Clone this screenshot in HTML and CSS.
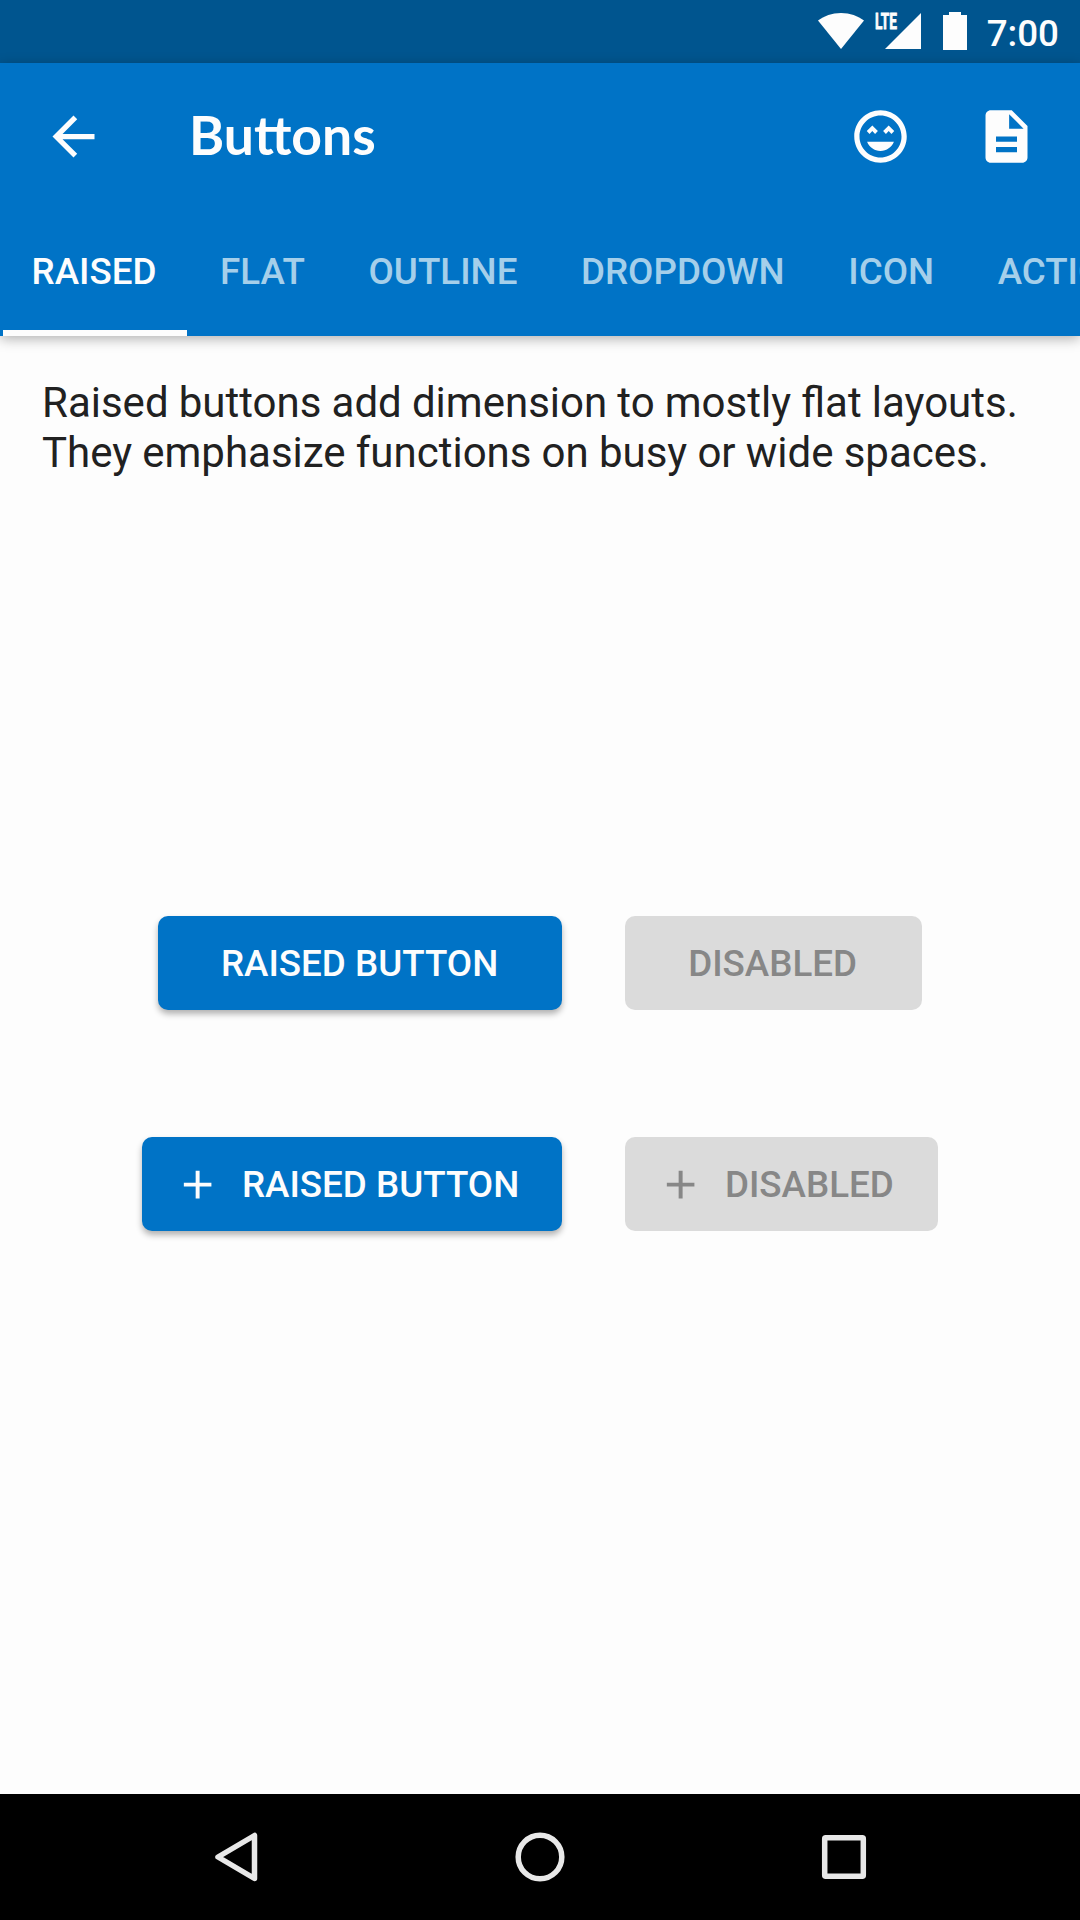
FILE: index.html
```html
<!DOCTYPE html>
<html lang="en">
<head>
<meta charset="utf-8">
<title>Buttons</title>
<link rel="stylesheet" href="styles.css">
</head>
<body>
<div class="status-bar">
  <svg class="status-wifi" width="46" height="36" viewBox="0 0 46 36"><path d="M23 36L0 7.500C6 3 14 0 23 0s17 3 23 7.500z"/></svg>
  <span class="lte">LTE</span>
  <svg class="status-signal" width="36" height="36" viewBox="0 0 36 36"><path d="M36 0v36H0z"/></svg>
  <svg class="status-battery" width="24" height="38" viewBox="0 0 24 38"><path d="M6 0h12v3h6v35H0V3h6z"/></svg>
  <span class="clock">7:00</span>
</div>
<header class="app-header">
  <div class="toolbar">
    <svg class="icon" viewBox="0 0 24 24"><path d="M20 11H7.83l5.59-5.59L12 4l-8 8 8 8 1.41-1.41L7.83 13H20v-2z"/></svg>
    <h1 class="title">Buttons</h1>
    <div class="actions">
      <svg class="icon" viewBox="0 0 24 24"><path d="M11.99 2C6.47 2 2 6.47 2 12s4.47 10 9.99 10S22 17.53 22 12 17.52 2 11.99 2zM12 20c-4.42 0-8-3.58-8-8s3.58-8 8-8 8 3.58 8 8-3.58 8-8 8zm1-10.06L14.06 11l1.06-1.06L16.18 11l1.06-1.06-2.12-2.12zm-4.12 0L9.94 11 11 9.94 8.88 7.82 6.76 9.94 7.82 11zM12 17.500c2.33 0 4.31-1.46 5.11-3.500H6.89c.8 2.040 2.780 3.500 5.110 3.500z"/></svg>
      <svg class="icon" viewBox="0 0 24 24"><path d="M14 2H6c-1.1 0-1.99.9-1.99 2L4 20c0 1.1.89 2 1.99 2H18c1.1 0 2-.9 2-2V8l-6-6zm2 16H8v-2h8v2zm0-4H8v-2h8v2zm-3-5V3.500L18.500 9H13z"/></svg>
    </div>
  </div>
  <nav class="tabs">
    <a class="tab tab-active">RAISED</a>
    <a class="tab">FLAT</a>
    <a class="tab">OUTLINE</a>
    <a class="tab">DROPDOWN</a>
    <a class="tab">ICON</a>
    <a class="tab">ACTION</a>
  </nav>
</header>
<main class="content">
  <p class="description">Raised buttons add dimension to mostly flat layouts.<br>They emphasize functions on busy or wide spaces.</p>
  <div class="samples">
    <div class="sample-row">
      <button class="button">RAISED BUTTON</button>
      <button class="button" disabled>DISABLED</button>
    </div>
    <div class="sample-row">
      <button class="button button-icon"><svg class="plus" viewBox="0 0 24 24"><path d="M19 13h-6v6h-2v-6H5v-2h6V5h2v6h6v2z"/></svg>RAISED BUTTON</button>
      <button class="button button-icon" disabled><svg class="plus" viewBox="0 0 24 24"><path d="M19 13h-6v6h-2v-6H5v-2h6V5h2v6h6v2z"/></svg>DISABLED</button>
    </div>
  </div>
</main>
<footer class="nav-bar">
  <svg class="nav-icon" viewBox="0 0 60 60"><path d="M48.500 8.500v43L12 30z"/></svg>
  <svg class="nav-icon" viewBox="0 0 60 60"><circle cx="30" cy="30" r="21.800"/></svg>
  <svg class="nav-icon" viewBox="0 0 60 60"><rect x="10.700" y="10.700" width="38.600" height="38.600" rx="1"/></svg>
</footer>
</body>
</html>
```
FILE: styles.css
```css
* { box-sizing: border-box; }
body {
  margin: 0;
  width: 1080px;
  height: 1920px;
  overflow: hidden;
  display: flex;
  flex-direction: column;
  background: #fdfdfd;
  color: #212121;
  font-family: Roboto, sans-serif;
}
svg { display: block; flex: none; fill: currentColor; }

.status-bar {
  height: 63px;
  flex: none;
  display: flex;
  align-items: flex-start;
  justify-content: flex-end;
  padding: 12px 21px 0 0;
  background: #00558f;
  color: #fdfdfd;
}
.status-wifi { margin-top: 1px; }
.lte {
  width: 9px;
  margin: 2px 0 0 11px;
  font: 700 22px/16px Roboto, sans-serif;
  -webkit-text-stroke: .8px #fdfdfd;
  white-space: nowrap;
  transform: scaleX(.62);
  transform-origin: left;
}
.status-signal { margin: 1px 22px 0 1px; }
.clock {
  margin: 1px 0 0 20px;
  font-size: 36.750px;
  font-weight: 500;
  line-height: 42px;
}

.app-header {
  position: relative;
  flex: none;
  height: 273px;
  background: #0073c6;
  color: #fdfdfd;
  box-shadow: 0 3px 12px rgba(0, 0, 0, .3);
}
.toolbar {
  height: 147px;
  display: flex;
  align-items: center;
  padding: 0 42px;
}
.icon { width: 63px; height: 63px; }
.title {
  margin: 0 0 5px 84px;
  font: 700 53.500px/60px Lato, sans-serif;
}
.actions { display: flex; gap: 63px; margin-left: auto; }
.tabs { display: flex; gap: .6px; height: 126px; overflow: hidden; }
.tab {
  flex: none;
  padding: 0 31.500px;
  font-size: 36.750px;
  font-weight: 500;
  line-height: 123px;
  color: #a5cfea;
}
.tab-active {
  margin: 0 1px 0 3px;
  padding: 0 30.500px 0 28.500px;
  border-bottom: 6px solid #fdfdfd;
  color: #fdfdfd;
}

.content { flex: 1; display: flex; flex-direction: column; }
.description {
  margin: 42px 42px 0;
  font-size: 42px;
  line-height: 50px;
  word-spacing: -.25px;
  white-space: nowrap;
}
.samples {
  display: flex;
  flex-direction: column;
  gap: 127px;
  margin-top: 438px;
}
.sample-row { display: flex; justify-content: center; gap: 63px; }
.button {
  height: 94px;
  display: flex;
  align-items: center;
  padding: 2px 64px 0 63px;
  border: 0;
  border-radius: 10px;
  background: #0073c6;
  color: #fdfdfd;
  font: 500 36.750px/48px Roboto, sans-serif;
  box-shadow: 0 4px 6px rgba(0, 0, 0, .3);
}
.button-icon { padding: 1px 43px 0 31.500px; gap: 21px; }
.plus { width: 47.250px; height: 47.250px; }
.button:disabled {
  padding-right: 65px;
  background: #dbdbdb;
  color: #878787;
  box-shadow: none;
}
.button-icon:disabled { padding-right: 44px; }

.nav-bar {
  flex: none;
  height: 126px;
  display: flex;
  align-items: center;
  justify-content: center;
  gap: 244px;
  background: #000;
}
.nav-icon {
  width: 60px;
  height: 60px;
  fill: none;
  stroke: #e8e8e8;
  stroke-width: 5.500;
  stroke-linejoin: round;
}
```
